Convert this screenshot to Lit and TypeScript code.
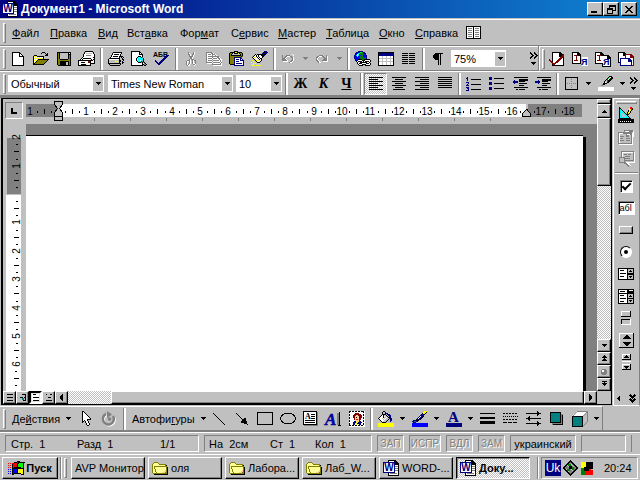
import { LitElement, html, svg, css } from "lit";
import { customElement } from "lit/decorators.js";
import { classMap } from "lit/directives/class-map.js";

const INK: Record<string, string> = {
  k: "#000000", w: "#ffffff", g: "#808080", s: "#c0c0c0", n: "#000080", b: "#0000ff",
  y: "#ffff00", Y: "#ffff99", o: "#808000", r: "#800000", R: "#ff0000", t: "#008080",
  c: "#00ffff", G: "#008000", L: "#00ff00", p: "#ffcc99",
};

/** Turns rows of colour letters into one path per colour. */
function pixels(rows: string, dx = 0, dy = 0) {
  const paths: Record<string, string> = {};
  rows.trim().split(/\s+/).forEach((line, y) => {
    let x = 0;
    while (x < line.length) {
      const ch = line[x];
      let n = 1;
      while (line[x + n] === ch) n++;
      if (INK[ch]) paths[ch] = (paths[ch] ?? "") + `M${x + dx} ${y + dy}h${n}v1h-${n}z`;
      x += n;
    }
  });
  return Object.entries(paths).map(([ch, d]) => svg`<path fill=${INK[ch]} d=${d}></path>`);
}
const fill = (color: string, d: string) => svg`<path fill=${color} d=${d}></path>`;
const line = (color: string, d: string, w = 1) =>
  svg`<path fill="none" stroke=${color} stroke-width=${w} d=${d}></path>`;
const icon = (w: number, h: number, body: unknown) =>
  html`<svg width=${w} height=${h} viewBox="0 0 ${w} ${h}" shape-rendering="crispEdges" aria-hidden="true">${body}</svg>`;
const bitmap = (w: number, h: number, rows: string) => icon(w, h, pixels(rows));
const rowsOf = (widths: number[], align: "l" | "c" | "r", full = 14) =>
  line("#000", widths.map((n, i) => {
    const x = align === "l" ? 0 : align === "r" ? full - n : Math.floor((full - n) / 2);
    return `M${x} ${i * 2 + 0.5}h${n}`;
  }).join(""));

const arrow = (dir: "down" | "up" | "left" | "right", color = "#000") => {
  const d = {
    down: "M0 0h5v1h-1v1h-1v1h-1v-1h-1v-1h-1z",
    up: "M2 0h1v1h1v1h1v1h-5v-1h1v-1h1z",
    left: "M3 0v7h-1v-1h-1v-1h-1v-3h1v-1h1v-1z",
    right: "M0 0v7h1v-1h1v-1h1v-3h-1v-1h-1v-1z",
  }[dir];
  return dir === "down" || dir === "up" ? icon(5, 3, fill(color, d)) : icon(3, 7, fill(color, d));
};

const wordIcon = icon(16, 16, svg`
  ${fill("#000", "M5 0h7l4 4v12h-11z")}${fill("#fff", "M6 1h5v4h4v10h-9z")}
  ${line("#808080", "M8 3.500h3M12 6.500h3M12 8.500h3M12 10.500h3M7 13.500h7")}
  ${fill("#000080", "M0 2h12v11h-12z")}${fill("#fff", "M1 3h10v9h-10z")}
  <text x="6" y="11" text-anchor="middle" font-family="Liberation Sans" font-weight="bold" font-size="10" fill="#000080">W</text>`);

const folderIcon = bitmap(16, 13, `
..oooo..........
.oYYYYo.........
oYYYYYYooooooo..
oYYYYYYYYYYYYok.
oYooooooooooooo.
oYoYYYYYYYYYYYok
oYoYYYYYYYYYYYok
oYYoYYYYYYYYYYok
oYYoYYYYYYYYYpok
oYYoYYYYYYYYppok
oYYYoYYYYYpppook
.ooooooooooooook
..kkkkkkkkkkkkkk`);

const I = {
  book: icon(15, 13, svg`${fill("#000", "M0 0h15v13h-15z")}${fill("#fff", "M1 1h6v11h-6zM8 1h6v11h-6z")}
    ${line("#808080", "M2 2.500h4M2 4.500h4M2 6.500h4M2 8.500h4M2 10.500h4M9 2.500h4M9 4.500h4M9 6.500h4M9 8.500h4M9 10.500h4")}`),
  fresh: bitmap(12, 14, `
kkkkkkkk....
kwwwwwwkk...
kwwwwwwkwk..
kwwwwwwkwwk.
kwwwwwwkkkkk
kwwwwwwwwwwk
kwwwwwwwwwwk
kwwwwwwwwwwk
kwwwwwwwwwwk
kwwwwwwwwwwk
kwwwwwwwwwwk
kwwwwwwwwwwk
kwwwwwwwwwwk
kkkkkkkkkkkk`),
  open: bitmap(16, 13, `
.........kkk....
........k...k.k.
.............kk.
.kkk........kkk.
kywykkkkkkk.....
kwywywywywk.....
kywywywywyk.....
kwywykkkkkkkkkkk
kywykoooooooook.
kwykoooooooook..
kykoooooooook...
kkoooooooook....
kkkkkkkkkkk.....`),
  save: bitmap(14, 14, `
kkkkkkkkkkkkkk
koksssssssskwk
koksssssssskkk
koksssssssskok
koksssssssskok
koksssssssskok
koksssssssskok
kookkkkkkkkook
kooooooooooook
kookkkkkkkkkok
kookkkkkksskok
kookkkkkksskok
kookkkkkksskok
.kkkkkkkkkkkkk`),
  mail: bitmap(17, 15, `
.......kkkkkkkk..
......kswwwwwwsk.
......kwsssssswk.
.....kwwwwwwwwwwk
.....kwwgggggwwwk
.....kwwwwwwwwwwk
....kwwwwwwwwwwkk
...kwkkkkkkkkwwwk
..kwkwwwwwwwwkwkk
kkkkkkkkkkkkkkkwk
kwwwwwwwwwrrkwwwk
kwwkkkkwwwrrkwwwk
kwwwwwwwwwwwkkkkk
kwwkkkkkwwwwk....
kkkkkkkkkkkkk....`),
  print: bitmap(16, 14, `
.....kkkkkkkkk..
....kwwwwwwwwk..
....kwkkkkkwk...
...kwwwwwwwwk...
...kwkkkkkwkkkk.
..kwwwwwwwwksksk
.kkkkkkkkkkkssk.
kwwwwwwwwwwksskk
ksssssssssskkssk
kssssssyyyskksk.
kssssssssssksskk
kkkkkkkkkkkkksk.
.kssssssssssk...
..kkkkkkkkkk....`),
  preview: bitmap(16, 15, `
kkkkkkkkk.......
kwwwwwwwkk......
kwwwwwwwkwk.....
kwwwwwwwkkkk....
kwwwwwwwwwwk....
kwwwwwwkkkwk....
kwwwwwkcwckg....
kwwwwkcccccck...
kwwwwkwccccck...
kwwwwkcccwcck...
kwwwwwkccckgk...
kwwwwwwkkkgkgk..
kwwwwwwwwwwkwgk.
kwwwwwwwwwwkkggk
kkkkkkkkkkkk.kk.`),
  spell: icon(15, 15, svg`<text x="-1" y="6" font-family="Liberation Sans" font-weight="bold" font-size="7">АБВ</text>
    ${line("#000080", "M1 9.500l4 4L14 4", 2)}`),
  cut: bitmap(10, 14, `
..g....gw.
..gw...gw.
..ggw.ggw.
...gw.gw..
...ggggw..
....ggw...
....ggw...
...gwggg..
.gggw.gwgg
gwwgw.gw.g
gw.gw.gw.g
gw.gw.gwwg
gwgw...ggw
.gww....w.`),
  copy: bitmap(16, 14, `
gggggg..........
gwwwwggw........
gwgggwgggw......
gwwwwwgwwgw.....
gwggggggggggg...
gwwwwwgwwwwggw..
gwggggwggggwggw.
gwwwwwgwwwwwwgww
gwggggwggggggwgw
gwwwwwgwwwwwwwgw
ggggggwgggggggwg
.wwwwwgwwwwwwwgw
......gggggggggw
.......wwwwwwwww`),
  paste: bitmap(16, 15, `
.....kkkk.......
.kkkkkyykkkkk...
kookykkkkykook..
koksssssssskok..
kokkkkkkkkkkok..
koooooooooooko..
koooonnnnnnno...
koooonwwwwwnn...
koooonwnnnwnwn..
koooonwwwwwnnnn.
koooonwnnnwwwwn.
koooonwwwwwwwwn.
koooonwnnnnnnwn.
.kkkknwwwwwwwwn.
.....nnnnnnnnnn.`),
  brush: bitmap(17, 15, `
.............nnn.
............nknnn
...........nknkn.
....k.kkkkkknkn..
...kwkwkwwkkkn...
..kwwkwkwwwkk....
.kwywwkwkwwk.....
..kwywwkwkk......
...kywywkwk......
.y..kywywwk......
..y..kywyk.......
y..y..kkk........
..y.y............
y.y...y..........
.yyy.yyyyy.......`),
  undo: bitmap(14, 9, `
..........w...
g...gggg...w..
g..ggwwwgg....
g.ggw....ggw..
gggw......gw..
ggggw.....gw..
gggggw...ggw..
.wwwww..ggw...
.......gww....`),
  redo: bitmap(14, 9, `
..............
...gggg...g...
.ggwwwgg..gw..
ggw....gg.gw..
gw......gggw..
gw.....ggggw..
ggw...gggggw..
.ggw...wwwww..
..gww.........`),
  link: bitmap(17, 16, `
....nnnnn........
..nnbbLLGnn......
.nbbcLGGGbnn.....
.nbwcbGGGGbn.....
nbcwcbbGGbbbn....
nbbcbbGGGbbbn....
nbbbbGGGGGbGn....
nbbbbbGGGGGGn....
.nbbkkkkGGkkkkkk.
.nbkwwwwkkkwwwwwk
..kwkkkkwkwkkkkwk
...kwwkkkkkkkwwk.
...kwkkkwwwwkkkwk
....kwwwkkkkwwwwk
.....kkkk..kkkkk.
.................`),
  table: icon(16, 14, svg`${fill("#000", "M0 0h16v14h-16z")}${fill("#fff", "M1 1h14v12h-14z")}${fill("#000080", "M1 1h14v3h-14z")}
    ${line("#c0c0c0", "M1 6.500h14M1 9.500h14M4.500 4v9M8.500 4v9M12.500 4v9")}`),
  columns: icon(13, 11, line("#000", [0, 2, 4, 6, 8, 10].map((y) => `M0 ${y + 0.5}h6M7 ${y + 0.5}h6`).join(""))),
  para: bitmap(10, 12, `
..kkkkkkkk
.kkkkk.k..
kkkkkk.k..
kkkkkk.k..
kkkkkk.k..
.kkkkk.k..
..kkkk.k..
.....k.k..
.....k.k..
.....k.k..
.....k.k..
.....k.k..`),
  docCheck: icon(16, 16, svg`${fill("#000", "M3 1h8l4 4v10h-12z")}${fill("#fff", "M4 2h6v4h4v8h-10z")}${line("#000", "M10.500 2v3.500h4")}${line("#800000", "M0 8.500l5 5L15 4", 2)}`),
  docI: icon(17, 16, svg`${fill("#000", "M1 1h6l3 3v9h-9z")}${fill("#fff", "M2 2h4v3h3v7h-7z")}${line("#800000", "M3 4.500h4M3 9.500h4M5 4v6")}
    ${fill("#fff", "M11 6h6v9h-6z")}<text x="10" y="14" font-family="Liberation Sans" font-weight="bold" font-size="9" fill="#000080">Я</text>`),
  docIJ: icon(18, 16, svg`${fill("#000", "M1 1h6l3 3v9h-9zM8 4h6l3 3v9h-9z")}${fill("#fff", "M2 2h4v3h3v7h-7zM9 5h4v3h3v7h-7z")}${line("#800000", "M3 4.500h4M3 9.500h4M5 4v6")}
    <text x="9" y="14" font-family="Liberation Sans" font-weight="bold" font-size="9" fill="#000080">Я</text>`),
  docs: icon(18, 16, svg`${fill("#000", "M1 1h6l3 3v8h-9z")}${fill("#fff", "M2 2h4v3h3v6h-7z")}${fill("#800000", "M8 3h6l3 3v9h-9z")}${fill("#fff", "M9 4h4v3h3v7h-7z")}
    ${fill("#000080", "M3 7h9l3 3v5h-12z")}${fill("#fff", "M4 8h7v3h3v3h-10z")}`),
  left: icon(14, 13, rowsOf([14, 9, 14, 9, 14, 9, 14], "l")),
  center: icon(14, 13, rowsOf([14, 8, 14, 8, 14, 8, 12], "c")),
  right: icon(14, 13, rowsOf([14, 9, 14, 9, 14, 9, 14], "r")),
  justify: icon(14, 13, rowsOf([14, 14, 14, 14, 14, 14], "l")),
  numbered: icon(15, 14, svg`${line("#000", "M5 2.500h10M5 7.500h10M5 12.500h10")}${pixels(`
.n.
nn.
.n.
.n.
...
nnn
..n
.n.
nnn
...
nnn
.nn
..n
nnn`)}`),
  bullets: icon(15, 13, svg`${line("#000", "M5 1.500h10M5 6.500h10M5 11.500h10")}${fill("#000080", "M0 0h3v3h-3zM0 5h3v3h-3zM0 10h3v3h-3z")}`),
  outdent: icon(16, 13, svg`${line("#000", "M2 .5h14M7 2.500h9M7 4.500h6M7 6.500h8M7 8.500h5M2 10.500h14M4 12.500h2M7 12.500h6")}${line("#000", "M7 3.500h9")}${fill("#000080", "M0 5h1v-1h1v-1h1v1h3v2h-3v1h-1v-1h-1v-1h-1z")}`),
  indent: icon(16, 13, svg`${line("#000", "M2 .5h14M7 2.500h9M7 4.500h6M7 6.500h8M7 8.500h5M2 10.500h14M4 12.500h2M7 12.500h6")}${line("#000", "M7 3.500h9")}${fill("#000080", "M6 5h-1v-1h-1v-1h-1v1h-3v2h3v1h1v-1h1v-1h1z")}`),
  border: icon(13, 13, svg`${line("#000", "M.5 .5h12v12h-12z")}<path d="M6.500 2v10M2 6.500h10" stroke="#808080" stroke-dasharray="1 1"></path>`),
  marker: icon(16, 15, svg`${pixels(`
...........kkk..
..........kLwkk.
.........kLwkkk.
........kGwkkk..
.......ksGkkk...
......kssGkk....
......kwskk.....
.....kkkk.......
....gkk.........
...gg...........`)}${fill("#fff", "M0 11h16v4h-16z")}`),
  chevrons: icon(8, 12, svg`${line("#000", "M0 0l3 2.500L0 5M4 0l3 2.500L4 5", 1.5)}${fill("#000", "M1 9h5v1h-1v1h-1v1h-1v-1h-1v-1h-1z")}`),
  pointer: bitmap(9, 15, `
kk.......
kwk......
kwwk.....
kwwwk....
kwwwwk...
kwwwwwk..
kwwwwwwk.
kwwwwwwwk
kwwwwkkkk
kwkwwk...
kk.kwwk..
k..kwwk..
....kwwk.
....kwwk.
.....kk..`),
  rotate: icon(15, 15, svg`<g shape-rendering="auto">${line("#fff", "M5 4a5.500 5.500 0 1 0 7 2", 2)}${line("#808080", "M4 3a5.500 5.500 0 1 0 7 2", 2.5)}
    <circle cx="7.500" cy="8" r="1.800" fill="#808080"></circle>${fill("#808080", "M5 0l5 3.500L5 7z")}</g>`),
  stroke: icon(12, 12, line("#000", "M0 0L12 12")),
  arrowLine: icon(12, 12, svg`${line("#000", "M0 0L9 9")}${fill("#000", "M12 12L4 9l5-5z")}`),
  rect: icon(16, 13, line("#000", "M.5 .5h15v12h-15z")),
  oval: icon(16, 13, svg`<ellipse cx="8" cy="6.500" rx="7.500" ry="5.500" fill="none" stroke="#000"></ellipse>`),
  textbox: icon(15, 15, svg`${fill("#808080", "M1 1h14v14h-14z")}${fill("#000", "M0 0h14v14h-14z")}${fill("#fff", "M1 1h12v12h-12z")}
    <text x="2" y="8" font-family="Liberation Serif" font-weight="bold" font-size="8">A</text>
    ${line("#000", "M8 3.500h4M8 5.500h4M8 7.500h4M2 9.500h10M2 11.500h10")}`),
  wordart: icon(17, 16, svg`<g shape-rendering="auto">${fill("#808080", "M12 2h2v12h-2z")}${fill("#000", "M14 1h1v13h-1zM13 14h3v1h-3z")}
    <text x="0" y="14" font-family="Liberation Serif" font-weight="bold" font-style="italic" font-size="17" fill="#0000c0" stroke="#000080" stroke-width=".5">A</text></g>`),
  clip: icon(16, 16, svg`${fill("#fff", "M0 0h16v16h-16z")}<path d="M0 .5h15M0 14.500h15M.5 0v15M14.500 0v15" fill="none" stroke="#000" stroke-dasharray="2 1"></path>${pixels(`
...rrrr...
..rrrrrrr.
.rrrpprrrr
.rrpppprrr
.rrpkppkrr
..rpppprr.
..rpRRprr.
...ppppr..
..nkppyrn.
.nnkyynnnn
.nnyyknnn.
.nn.yy.nn.`, 3, 2)}`),
  bucket: icon(16, 16, svg`${pixels(`
.....kk.........
....k..k........
....k..knn......
....kkkk.nnn....
...kwkssk.nnn...
..kwwkwssk.nn...
.kwwwksswsknn...
kwwwswswsssknn..
.kwwwswsssk.nn..
..kwwwsssk..nn..
...kwsssk...n...
....kkkk........`)}${fill("#ff0", "M0 12h16v4h-16z")}`),
  pen: icon(16, 16, svg`${pixels(`
............yyy.
...........yywk.
..........kyyk..
.........nnkk...
........nnnn....
.......nwnnk....
......nwnnk.....
.....nwnnk......
....knnnk.......
.nnnkkk.........
nnttnn..........
.nnn............`)}${fill("#00f", "M0 12h16v4h-16z")}`),
  fontColor: icon(16, 16, svg`<text x="2" y="11" font-family="Liberation Serif" font-weight="bold" font-size="15" fill="#000080">A</text>${fill("#000080", "M0 12h16v4h-16z")}`),
  weights: icon(15, 11, fill("#000", "M0 0h15v1h-15zM0 4h15v2h-15zM0 8h15v3h-15z")),
  dashes: icon(15, 11, svg`<path d="M0 .5h15M0 6.500h15" stroke="#000" stroke-dasharray="2 1"></path><path d="M0 3.500h15" stroke="#000" stroke-dasharray="1 1"></path><path d="M0 9.500h15" stroke="#000" stroke-dasharray="4 1"></path>`),
  arrows: icon(15, 15, svg`${line("#000", "M0 2.500h13M2 7.500h13M0 12.500h15")}${fill("#000", "M11 0l4 2.500-4 2.500zM4 5v5L0 7.500zM11 10l4 2.500-4 2.500z")}`),
  shadow: icon(13, 13, svg`${fill("#808080", "M2 2h11v11h-11z")}${line("#000", "M12.500 3v10M3 12.500h10")}${fill("#000", "M0 0h11v11h-11z")}${fill("#008080", "M1 1h9v9h-9z")}`),
  cube: icon(16, 16, svg`<g shape-rendering="auto">${fill("#fff", "M0 5L5 0h11l-5 5z")}${fill("#c0c0c0", "M11 5l5-5v10l-5 6z")}<path d="M.5 5.500L5 .5h10.500v10L11 15.500M11 5.500l4.500-5" fill="none" stroke="#808080"></path>${fill("#000", "M0 5h11v11h-11z")}${fill("#008080", "M1 6h9v9h-9z")}</g>`),
  design: icon(16, 16, svg`${fill("#000", "M1 0L13 11v1h-12z")}${fill("#0ff", "M2 2L11 11h-9z")}${fill("#c0c0c0", "M4 6l4 4h-4z")}${pixels(`
...RR.
..yRRr
..yyRk
.kyyk.
.kyk..
kyyk..
kyk...
kk....`, 9, 0)}${fill("#000", "M0 12h16v4h-16z")}${line("#fff", "M2 14.500h1M4 14.500h1M6 14.500h1M8 14.500h1M10 14.500h1M12 14.500h1")}`),
  props: icon(16, 16, svg`${line("#fff", "M1.500 4.500h13v11h-13z")}${line("#808080", "M.5 3.500h13v11h-13zM2 7.500h4M2 9.500h3M2 11.500h4M8 9.500h4M8 11.500h4")}${fill("#808080", "M6 1h9v2h-2v3h-2v2h-3v-3h-3z")}${line("#fff", "M7 2.500h4M15.500 2v6M9 5.500h3")}`),
  code: icon(16, 16, svg`${line("#fff", "M4.500 1.500h12v10h-12z")}${line("#808080", "M3.500 .5h12v9h-12zM6 3.500h3M10 3.500h3M7 5.500h5M6 7.500h6")}<circle cx="4" cy="9" r="3" fill="#c0c0c0" stroke="#808080"></circle>${line("#808080", "M6 11l5 4", 2)}${line("#fff", "M8 11l5 4")}`),
  list: icon(16, 12, svg`${fill("#000", "M0 0h16v12h-16z")}${fill("#fff", "M1 1h8v10h-8z")}${fill("#c0c0c0", "M10 1h5v4h-5zM10 7h5v4h-5z")}${line("#000", "M2 2.500h4M2 5.500h6M2 8.500h4M12 2.500h1M11 3.500h3M11 8.500h3M12 9.500h1")}`),
  comboBox: icon(16, 15, svg`${fill("#000", "M0 0h16v15h-16z")}${fill("#fff", "M1 1h8v3h-8zM1 5h8v9h-8zM11 1h4v1h-4z")}${fill("#c0c0c0", "M10 5h5v4h-5zM10 10h5v4h-5z")}${line("#000", "M2 2.500h5M2 6.500h4M2 9.500h6M2 12.500h4M12 6.500h1M11 7.500h3M11 11.500h3M12 12.500h1")}`),
  toggle: icon(10, 14, svg`${fill("#000", "M0 0h10v6h-10z")}${fill("#fff", "M0 0h9v5h-9z")}${fill("#c0c0c0", "M1 1h8v4h-8z")}${fill("#fff", "M0 8h10v6h-10z")}${fill("#000", "M0 8h9v5h-9z")}${fill("#c0c0c0", "M1 9h8v4h-8z")}`),
  spin: icon(15, 15, svg`${fill("#000", "M0 0h15v15h-15z")}${fill("#fff", "M0 0h14v14h-14z")}${fill("#c0c0c0", "M1 1h13v13h-13z")}${fill("#000", "M7 2h1l4 4h-9zM3 9h9l-4 4h-1z")}`),
  scroll: icon(9, 16, svg`${fill("#000", "M0 0h9v6h-9zM0 10h9v6h-9z")}${fill("#fff", "M0 0h8v5h-8zM0 10h8v5h-8z")}${fill("#c0c0c0", "M1 1h7v4h-7zM1 11h7v4h-7z")}${fill("#000", "M4 1h1v1h1v1h1v1h-5v-1h1v-1h1zM2 12h5v1h-1v1h-1v1h-1v-1h-1v-1h-1z")}${line("#fff", "M0 7.500h9")}`),
  pageUp: bitmap(5, 7, `..k.. .kkk. kkkkk ..k.. .kkk. kkkkk .....`),
  pageDown: bitmap(5, 7, `kkkkk ..k.. kkkkk .kkk. ..k.. ..... .....`),
  browse: icon(6, 6, svg`<circle cx="3" cy="3" r="3" fill="#808080"></circle>${fill("#fff", "M1 1h2v2h-2z")}`),
  viewNormal: icon(6, 7, line("#000", "M0 .5h6M0 3.500h6M0 6.500h6")),
  viewWeb: icon(6, 7, svg`${line("#000", "M2 .5h4M0 3.500h3M4 3.500h2M3 6.500h3M5.500 0v6")}${fill("#008080", "M2 4h2v2h-2z")}`),
  viewPrint: icon(7, 7, svg`${fill("#fff", "M0 0h7v7h-7z")}${line("#000", "M1 .5h3M1 3.500h6M1 6.500h6")}`),
  viewOutline: icon(6, 7, line("#000", "M0 .5h1M4 .5h2M2 3.500h3M0 6.500h6")),
  more: icon(6, 7, line("#000", "M0 0l2.500 2.500L5 0M0 4l2.500 2.500L5 4", 1.5)),
  flag: bitmap(17, 14, `
.........kkk.....
......kkkRkkkkkkk
R.R.RkRRRkkLLLLk.
....kRRRRkLLLLLk.
R.R.kRRRRkLLLLLk.
....kRRRRkLLLLLk.
R.R.kRkkkkkkkLLk.
....kkkkkkkkkkkk.
b.b.kbbbbkyyyyyk.
....kbbbbkyyyyyk.
b.b.kbbbbkyyyyyk.
....kbbbbkyyyyyk.
b.b.kbkkkkkkkyyk.
....kk.......kkk.`),
  minimize: icon(8, 8, fill("#000", "M0 6h6v2h-6z")),
  restore: icon(9, 9, svg`${line("#000", "M2.500 5V.5h6v5H6M.5 3.500h5v5h-5zM2 1.500h7M0 4.500h6")}`),
  close: icon(8, 7, line("#000", "M.5 0l7 7M7.500 0l-7 7", 1.6)),
  diamond: icon(16, 16, svg`${fill("#000", "M8 0l8 8-8 8-8-8z")}${fill("#808080", "M8 2l6 6-6 6-6-6z")}${line("#c0c0c0", "M5 5l6 6M4 9l3 3M9 4l3 3")}${fill("#008000", "M6 4h3v2h-3zM10 7h2v3h-2zM5 9h3v2h-3z")}${fill("#000", "M7 6h3v3h-3z")}`),
  monitor: icon(12, 13, svg`${fill("#ff0", "M0 0h6v6h-6z")}${fill("#000", "M5 0h7v7h-7z")}${fill("#008000", "M0 6h5v7h-5z")}${fill("#f00", "M5 6l7 2v5h-7z")}${fill("#000", "M3 5h5v4h-5z")}`),
};

type Item = [keyof typeof I, string, string?];

@customElement("app-root")
export class AppRoot extends LitElement {
  static styles = css`
    :host { display: flex; flex-direction: column; min-height: 100vh; background: #c0c0c0; color: #000; font: 11px/14px "Liberation Sans", Arial, sans-serif; cursor: default; }
    * { box-sizing: border-box; }
    svg { display: block; flex: none; overflow: visible; }
    button { display: flex; align-items: center; justify-content: center; margin: 0; padding: 0; border: 0; background: none; color: inherit; font: inherit; flex: none; }
    .raised { background: #c0c0c0; border: 1px solid; border-color: #fff #000 #000 #fff; box-shadow: inset -1px -1px #808080; }
    .title { display: flex; align-items: center; height: 18px; padding: 0 3px 0 2px; gap: 3px; background: linear-gradient(90deg, #000080, #1084d0); color: #fff; }
    h1 { flex: 1; margin: 0; font: bold 12px/18px "Liberation Sans", Arial, sans-serif; }
    .win { display: flex; }
    .win button { width: 16px; height: 14px; }
    .win button:last-child { margin-left: 2px; }
    .bar { display: flex; align-items: center; min-width: 0; padding-left: 3px; border-top: 1px solid #fff; border-bottom: 1px solid #808080; }
    .menu { height: 27px; margin-top: 1px; }
    .tools { height: 25px; }
    .grow { flex: 1; }
    .tools-row { display: flex; }
    .side-tools { border-left: 1px solid #fff; padding: 0 3px 0 2px; box-shadow: -1px 0 #808080; }
    .grip { flex: none; width: 3px; height: 20px; border: 1px solid; border-color: #fff #808080 #808080 #fff; }
    .menu nav { display: grid; grid-template-columns: 38px 48px 29px 53px 51px 47px 48px 53px 36px 51px auto; margin-left: 1px; }
    .menu nav button { justify-content: flex-start; padding-left: 5px; height: 18px; }
    .t { width: 23px; height: 22px; }
    .drop { width: 11px; height: 22px; }
    .on { background: repeating-conic-gradient(#fff 0 25%, #c0c0c0 0 50%) 0 0 / 2px 2px; border: 1px solid; border-color: #808080 #fff #fff #808080; }
    .sep { flex: none; width: 6px; height: 22px; display: flex; justify-content: center; }
    .sep::before { content: ""; width: 2px; background: #fff; border-left: 1px solid #808080; }
    .combo { display: flex; align-items: center; flex: none; height: 17px; padding: 1px; background: #fff; }
    .combo select { flex: 1; min-width: 0; height: 15px; margin: 0; padding: 0 2px; border: 0; background: #fff; appearance: none; color: #000; font: inherit; }
    .combo span { display: flex; align-items: center; justify-content: center; width: 10px; height: 14px; background: #c0c0c0; }
    .zoom { width: 55px; margin: 0 22px 0 2px; }
    .style { width: 96px; margin-left: 2px; }
    .font { width: 125px; margin-left: 4px; }
    .size { width: 46px; margin: 0 1px 0 3px; }
    .letter { font: bold 14px/22px "Liberation Serif", serif; }
    .letter.k { font-style: italic; }
    .letter.u { text-decoration: underline; }
    .over { width: 11px; height: 22px; }

    .work { flex: 1; display: flex; border-top: 2px solid #808080; }
    .doc { flex: 1; display: grid; grid-template-columns: 23px minmax(0, 1fr) 14px; grid-template-rows: 25px minmax(0, 1fr) 13px; min-width: 0; border: solid #000; border-width: 1px 1px 1px 2px; margin: 0 1px 1px; }
    .corner { display: flex; padding: 3px 0 0 2px; }
    .corner button { width: 18px; height: 17px; border: 1px solid; border-color: #808080 #fff #fff #808080; }
    .hruler, .vruler { overflow: hidden; }
    .hruler { height: 25px; }
    .desk { display: flex; min-width: 0; padding: 11px 14px 0 0; background: #808080; }
    .page { flex: 1; min-width: 0; margin: 0; padding: 64px 58px 0 32px; border: 0; border-top: 1px solid #000; outline: 0; resize: none; background: #fff; box-shadow: 3px 2px #000; font: 12px/16px "Liberation Serif", serif; }
    .desk, .vruler { grid-row: 2; }
    .desk { overflow: hidden; }
    .vscroll { grid-column: 3; grid-row: 1 / 3; display: flex; flex-direction: column; background: repeating-conic-gradient(#fff 0 25%, #c0c0c0 0 50%) 0 0 / 2px 2px; }
    .vscroll button { width: 14px; height: 13px; }
    .foot button { width: 13px; height: 13px; }
    .vscroll .split { height: 5px; }
    .vscroll .up { height: 14px; }
    .vscroll .thumb { height: 68px; }
    .rest { flex: 1; }
    .foot { grid-column: 1 / 4; display: flex; background: #c0c0c0; }
    .foot .active { background: #e0e0e0; border: 2px solid; border-color: #000 #fff #fff #000; }
    .track { width: 43px; background: repeating-conic-gradient(#fff 0 25%, #c0c0c0 0 50%) 0 0 / 2px 2px; }
    .foot .thumb { flex: 1; }
    .foot .end { margin-right: 14px; }
    .side { display: flex; flex-direction: column; align-items: center; width: 27px; padding: 2px 1px 0 0; border: solid #fff; border-width: 1px 0 1px 1px; border-right: 1px solid #808080; }
    .side .hgrip { width: 21px; height: 3px; border: 1px solid; border-color: #fff #808080 #808080 #fff; }
    .side > button { width: 23px; height: 22px; }
    .hsep { width: 23px; height: 2px; margin: 2px 0 1px; border-top: 1px solid #808080; border-bottom: 1px solid #fff; }
    .cell { display: flex; align-items: center; justify-content: center; height: 22px; }
    .cell input { appearance: none; margin: 0; padding: 0; border: 1px solid; border-color: #808080 #fff #fff #808080; background: #fff; outline: 0; }
    .cell .check { display: grid; place-content: center; width: 13px; height: 13px; box-shadow: inset 1px 1px #000; }
    .cell .check:checked::before { content: ""; width: 7px; height: 3px; border: solid #000; border-width: 0 0 2px 2px; transform: translateY(-1px) rotate(-45deg); }
    .cell .edit { width: 17px; height: 14px; padding-left: 1px; box-shadow: inset 1px 1px #000; font: 9px/11px "Liberation Sans", sans-serif; }
    .cell .radio { display: grid; place-content: center; width: 12px; height: 12px; border-radius: 50%; }
    .cell .radio { border-color: #000 #fff #fff #000; }
    .cell .radio:checked::before { content: ""; width: 4px; height: 4px; border-radius: 50%; background: #000; }
    .cell .push { width: 14px; height: 8px; }
    .side footer { display: flex; justify-content: space-between; align-items: center; width: 19px; margin-top: auto; padding-bottom: 3px; }

    .draw-row { display: flex; }
    .draw { height: 26px; border-right: 1px solid #808080; border-bottom-width: 2px; }
    .wordy { gap: 6px; height: 22px; justify-content: flex-start; }
    .actions { width: 69px; padding-left: 6px; }
    .shapes { width: 80px; padding-left: 5px; }
    .blank { flex: 1; border-bottom: 2px solid #808080; }

    .status { display: flex; align-items: center; gap: 5px; height: 22px; padding-left: 5px; border-top: 1px solid #fff; }
    .panel { display: grid; align-items: center; height: 17px; border: 1px solid; border-color: #808080 #fff #fff #808080; white-space: nowrap; }
    .where { grid-template-columns: 66px 83px auto; width: 194px; padding-left: 5px; }
    .place { grid-template-columns: 61px 45px auto; width: 168px; padding-left: 4px; }
    .mode { width: 27px; justify-content: center; color: #808080; text-shadow: 1px 1px #fff; font-size: 10px; }
    .mode.wide { width: 32px; }
    .lang { width: 66px; justify-content: center; }
    .empty { width: 45px; }
    .tail { border-left: 1px solid #808080; height: 17px; }

    .task { display: flex; align-items: center; height: 27px; padding: 0 2px; border-top: 1px solid #fff; }
    .task button { height: 22px; }
    .start { width: 56px; gap: 1px; font-weight: bold; }
    .task .div { width: 2px; height: 22px; margin: 0 2px; border-left: 1px solid #808080; border-right: 1px solid #fff; }
    .task .list { flex: 1; display: flex; gap: 3px; min-width: 0; margin-left: 4px; }
    .task .item { width: 74px; padding: 0 3px; gap: 3px; justify-content: flex-start; overflow: hidden; white-space: nowrap; }
    .task .item.current { background: repeating-conic-gradient(#fff 0 25%, #c0c0c0 0 50%) 0 0 / 2px 2px; border: 1px solid; border-color: #000 #fff #fff #000; box-shadow: inset 1px 1px #808080; font-weight: bold; }
    .tray { display: flex; align-items: center; gap: 1px; width: 97px; height: 22px; padding-left: 3px; border: 1px solid; border-color: #808080 #fff #fff #808080; }
    .uk { width: 16px; height: 16px; background: #000080; color: #fff; font: 12px/16px "Liberation Sans", sans-serif; text-align: center; }
    .tray svg + svg { margin-left: 2px; }
    time { margin-left: 10px; }
  `;

  private tool([name, label, cls]: Item) {
    return html`<button class=${classMap({ t: true, on: cls === "on" })} aria-label=${label} title=${label}>${I[name]}</button>`;
  }
  private tools(items: Item[]) { return items.map((i) => this.tool(i)); }
  private get sep() { return html`<span class="sep"></span>`; }
  private drop(label: string, color = "#000") {
    return html`<button class="drop" aria-label=${label}>${arrow("down", color)}</button>`;
  }
  private combo(cls: string, label: string, value: string) {
    return html`<label class="combo ${cls}"><select aria-label=${label}><option>${value}</option></select><span>${arrow("down")}</span></label>`;
  }
  private menuItem(text: string, key: number) {
    return html`<button><span>${text.slice(0, key)}<u>${text[key]}</u>${text.slice(key + 1)}</span></button>`;
  }

  /** Ruler marks: a dot at each quarter, a dash at each half and a number at each centimetre. */
  private marks(from: number, to: number, origin: number, vertical: boolean) {
    const out = [];
    for (let q = from * 4; q <= to * 4; q++) {
      if (q === 0) continue;
      const p = origin + Math.round((q * 28.4) / 4);
      const mid = vertical ? 13 : 12;
      if (q % 4 === 0) {
        const n = Math.abs(q / 4);
        out.push(vertical
          ? svg`<text transform="translate(${mid + 4} ${p}) rotate(-90)" text-anchor="middle" font-size="10">${n}</text>`
          : svg`<text x=${p} y=${mid + 4} text-anchor="middle" font-size="10">${n}</text>`);
      } else {
        const len = q % 2 === 0 ? 5 : 1;
        const a = mid - (len - 1) / 2;
        out.push(vertical
          ? svg`<rect x=${a} y=${p} width=${len === 1 ? 2 : len} height="1"></rect>`
          : svg`<rect x=${p} y=${a} width="1" height=${len === 1 ? 2 : len}></rect>`);
      }
    }
    return out;
  }
  private get horizontal() {
    return icon(572, 25, svg`
      ${fill("#808080", "M0 5h32v13h-32zM502 5h54v13h-54z")}${fill("#fff", "M32 5h468v13h-468z")}
      ${this.marks(-1, 18, 32, false)}
      ${Array.from({ length: 12 }, (_, i) => svg`<rect x=${68 + i * 36} y="19" width="1" height="3" fill="#808080"></rect>`)}
      <path d="M28.500 2.500h8v3l-3 4 3 4v8h-8v-8l3-4-3-4z" fill="#c0c0c0" stroke="#000"></path>${line("#000", "M28 17.500h9")}
      <path d="M496.500 17.500v-3l4-4 4 4v3z" fill="#c0c0c0" stroke="#000"></path>`);
  }
  private get vertical() {
    return icon(23, 267, svg`
      ${fill("#808080", "M4 14h14v56h-14z")}${fill("#fff", "M3 71h15v196h-15z")}
      ${this.marks(-2, 6, 70, true)}
      <rect x="12" y="247" width="2" height="1"></rect><rect x="11" y="254" width="5" height="1"></rect><rect x="12" y="261" width="2" height="1"></rect>`);
  }

  render() {
    return html`
      <header class="title">${wordIcon}<h1>Документ1 - Microsoft Word</h1>
        <div class="win">
          <button class="raised" aria-label="Свернуть">${I.minimize}</button>
          <button class="raised" aria-label="Восстановить">${I.restore}</button>
          <button class="raised" aria-label="Закрыть">${I.close}</button>
        </div>
      </header>
      <div class="bar menu"><span class="grip"></span>
        <nav>
          ${([["Файл", 0], ["Правка", 0], ["Вид", 0], ["Вставка", 3], ["Формат", 3], ["Сервис", 1], ["Мастер", 0], ["Таблица", 0], ["Окно", 0], ["Справка", 0]] as [string, number][]).map(([t, k]) => this.menuItem(t, k))}
          <button aria-label="Книга">${I.book}</button>
        </nav>
      </div>
      <div class="tools-row">
        <div class="bar tools grow"><span class="grip"></span>
          ${this.tools([["fresh", "Создать"], ["open", "Открыть"], ["save", "Сохранить"], ["mail", "Сообщение"]])}${this.sep}
          ${this.tools([["print", "Печать"], ["preview", "Просмотр"], ["spell", "Правописание"]])}${this.sep}
          ${this.tools([["cut", "Вырезать"], ["copy", "Копировать"], ["paste", "Вставить"], ["brush", "Формат по образцу"]])}${this.sep}
          ${this.tool(["undo", "Отменить"])}${this.drop("Список отмены", "#808080")}${this.tool(["redo", "Вернуть"])}${this.drop("Список возврата", "#808080")}${this.sep}
          ${this.tools([["link", "Гиперссылка"], ["table", "Таблица"], ["columns", "Колонки"]])}${this.sep}
          ${this.tool(["para", "Непечатаемые знаки"])}
          ${this.combo("zoom", "Масштаб", "75%")}
          <button class="over" aria-label="Другие кнопки">${I.chevrons}</button>
        </div>
        <div class="bar tools side-tools"><span class="grip"></span>
          ${this.tools([["docCheck", "Проверить"], ["docI", "Перевести"], ["docIJ", "Перевести документ"], ["docs", "Документы"]])}
        </div>
      </div>
      <div class="bar tools"><span class="grip"></span>
        ${this.combo("style", "Стиль", "Обычный")}${this.combo("font", "Шрифт", "Times New Roman")}${this.combo("size", "Размер", "10")}${this.sep}
        <button class="t letter">Ж</button><button class="t letter k">К</button><button class="t letter u">Ч</button>${this.sep}
        ${this.tools([["left", "По левому краю", "on"], ["center", "По центру"], ["right", "По правому краю"], ["justify", "По ширине"]])}${this.sep}
        ${this.tools([["numbered", "Нумерация"], ["bullets", "Маркеры"], ["outdent", "Уменьшить отступ"], ["indent", "Увеличить отступ"]])}${this.sep}
        ${this.tool(["border", "Границы"])}${this.drop("Виды границ")}${this.tool(["marker", "Выделение цветом"])}${this.drop("Цвета выделения")}
        <button class="over" aria-label="Другие кнопки">${I.chevrons}</button>
      </div>

      <main class="work">
        <div class="doc">
          <div class="corner"><button aria-label="Табуляция">${icon(6, 6, fill("#000", "M0 0h2v4h4v2h-6z"))}</button></div>
          <div class="hruler">${this.horizontal}</div>
          <div class="vscroll">
            <button class="raised split" aria-label="Разделить"></button>
            <button class="raised up" aria-label="Вверх">${arrow("up")}</button>
            <button class="raised thumb" aria-label="Бегунок"></button>
            <span class="rest"></span>
            <button class="raised" aria-label="Вниз">${arrow("down")}</button>
            <button class="raised" aria-label="Предыдущая страница">${I.pageUp}</button>
            <button class="raised" aria-label="Выбор объекта">${I.browse}</button>
            <button class="raised" aria-label="Следующая страница">${I.pageDown}</button>
          </div>
          <div class="vruler">${this.vertical}</div>
          <div class="desk"><textarea class="page" aria-label="Документ"></textarea></div>
          <div class="foot">
            <button class="raised" aria-label="Обычный режим">${I.viewNormal}</button>
            <button class="raised" aria-label="Веб-документ">${I.viewWeb}</button>
            <button class="active" aria-label="Разметка страницы">${I.viewPrint}</button>
            <button class="raised" aria-label="Структура">${I.viewOutline}</button>
            <button class="raised" aria-label="Влево">${arrow("left")}</button>
            <span class="track"></span>
            <button class="raised thumb" aria-label="Бегунок"></button>
            <button class="raised end" aria-label="Вправо">${arrow("right")}</button>
          </div>
        </div>
        <aside class="side"><span class="hgrip"></span>
          ${([["design", "Режим конструктора"], ["props", "Свойства"], ["code", "Программа"]] as Item[]).map((i) => this.tool(i))}
          <span class="hsep"></span>
          <span class="cell"><input class="check" type="checkbox" checked aria-label="Флажок"></span>
          <span class="cell"><input class="edit" type="text" value="абl" aria-label="Поле"></span>
          <span class="cell"><button class="raised push" aria-label="Кнопка"></button></span>
          <span class="cell"><input class="radio" type="radio" checked aria-label="Переключатель"></span>
          ${([["list", "Список"], ["comboBox", "Поле со списком"], ["toggle", "Выключатель"], ["spin", "Счетчик"], ["scroll", "Полоса прокрутки"]] as Item[]).map((i) => this.tool(i))}
          <footer>${icon(3, 5, fill("#000", "M3 0v5L0 2.500z"))}${I.more}</footer>
        </aside>
      </main>

      <div class="draw-row">
        <div class="bar draw"><span class="grip"></span>
          <button class="wordy actions"><span>Де<u>й</u>ствия</span>${arrow("down")}</button>
          ${this.tools([["pointer", "Выбор объектов"], ["rotate", "Свободное вращение"]])}${this.sep}
          <button class="wordy shapes"><span>Автофи<u>г</u>уры</span>${arrow("down")}</button>
          ${this.tools([["stroke", "Линия"], ["arrowLine", "Стрелка"], ["rect", "Прямоугольник"], ["oval", "Овал"], ["textbox", "Надпись"], ["wordart", "Добавить объект"], ["clip", "Картинка"]])}${this.sep}
          ${this.tool(["bucket", "Цвет заливки"])}${this.drop("Цвета заливки")}
          ${this.tool(["pen", "Цвет линий"])}${this.drop("Цвета линий")}
          ${this.tool(["fontColor", "Цвет шрифта"])}${this.drop("Цвета шрифта")}
          ${this.tools([["weights", "Тип линии"], ["dashes", "Тип штриха"], ["arrows", "Вид стрелки"], ["shadow", "Тень"], ["cube", "Объем"]])}
          ${this.drop("Другие кнопки")}
        </div>
        <div class="blank"></div>
      </div>

      <div class="status">
        <div class="panel where"><span>Стр.&nbsp; 1</span><span>Разд&nbsp; 1</span><span>1/1</span></div>
        <div class="panel place"><span>На&nbsp; 2см</span><span>Ст&nbsp; 1</span><span>Кол&nbsp; 1</span></div>
        <div class="panel mode">ЗАП</div><div class="panel mode wide">ИСПР</div><div class="panel mode">ВДЛ</div><div class="panel mode">ЗАМ</div>
        <div class="panel lang">украинский</div><div class="panel empty"></div><span class="tail"></span>
      </div>

      <footer class="task">
        <button class="raised start">${I.flag}Пуск</button><span class="div"></span><span class="grip"></span>
        <div class="list">
          <button class="raised item">AVP Монитор</button>
          <button class="raised item">${folderIcon}оля</button>
          <button class="raised item">${folderIcon}Лабора...</button>
          <button class="raised item">${folderIcon}Лаб_W...</button>
          <button class="raised item">${wordIcon}WORD-...</button>
          <button class="item current">${wordIcon}Доку...</button>
        </div>
        <span class="div"></span>
        <div class="tray"><span class="uk">Uk</span>${I.diamond}${I.monitor}<time>20:24</time></div>
      </footer>`;
  }
}
